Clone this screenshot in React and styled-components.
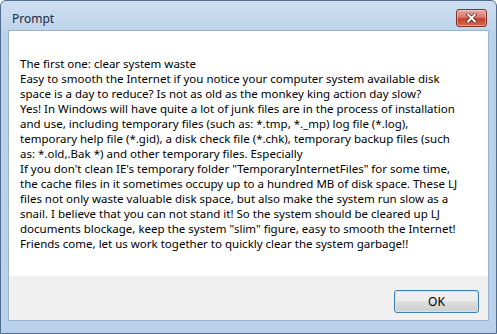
import styled, { createGlobalStyle } from 'styled-components';

const Global = createGlobalStyle`
  html, body { margin: 0; padding: 0; background: #fff; }
  body { font-family: "Noto Sans", "Open Sans", sans-serif; }
`;

const Window = styled.div`
  box-sizing: border-box;
  width: 497px;
  height: 334px;
  display: flex;
  flex-direction: column;
  padding: 0 7px 12px 7px;
  border: 1px solid #4f6c8e;
  border-radius: 6px 6px 0 0;
  background: linear-gradient(180deg, #cfdff1 0%, #b9d0ea 12%, #b9d1ea 100%);
`;

const TitleBar = styled.div`
  box-sizing: border-box;
  height: 29px;
  display: flex;
  align-items: flex-start;
  justify-content: space-between;
  padding: 8px 2px 0 4px;
`;

const Title = styled.span`
  font-size: 12px;
  line-height: 16px;
  color: #1c2a3f;
  margin-top: 2px;
`;

const CloseButton = styled.div`
  box-sizing: border-box;
  width: 31px;
  height: 18px;
  border: 1px solid #7d3326;
  border-radius: 3px;
  background: linear-gradient(180deg, #e9a99f 0%, #d9786b 45%, #c2412f 55%, #d46a4e 100%);
  display: flex;
  align-items: center;
  justify-content: center;
  box-shadow: inset 0 0 0 1px rgba(255, 255, 255, 0.35);
`;

const Client = styled.div`
  flex: 1;
  display: flex;
  flex-direction: column;
  border: 1px solid #9db3cb;
  background: #f0f0f0;
`;

const Message = styled.div`
  flex: 1;
  background: #fff;
  padding: 25px 11px 0 11px;
  font-size: 11.5px;
  line-height: 15px;
  color: #000;
`;

const Line = styled.div`
  white-space: nowrap;
`;

const Footer = styled.div`
  height: 44px;
  display: flex;
  justify-content: flex-end;
  align-items: flex-start;
  padding: 14px 9px 0 0;
  box-sizing: border-box;
`;

const Button = styled.button`
  width: 85px;
  height: 23px;
  border: 1px solid #3c7fb1;
  border-radius: 3px;
  font-family: inherit;
  font-size: 12px;
  color: #000;
  padding: 0;
  background: linear-gradient(180deg, #f2f2f2 0%, #ebebeb 48%, #dddddd 52%, #cfcfcf 100%);
  box-shadow: inset 0 0 0 1px #cde6f5;
`;

const lines = [
  'The first one: clear system waste',
  'Easy to smooth the Internet if you notice your computer system available disk',
  'space is a day to reduce? Is not as old as the monkey king action day slow?',
  'Yes! In Windows will have quite a lot of junk files are in the process of installation',
  'and use, including temporary files (such as: *.tmp, *._mp) log file (*.log),',
  'temporary help file (*.gid), a disk check file (*.chk), temporary backup files (such',
  'as: *.old,.Bak *) and other temporary files. Especially',
  'If you don\'t clean IE\'s temporary folder "TemporaryInternetFiles" for some time,',
  'the cache files in it sometimes occupy up to a hundred MB of disk space. These LJ',
  'files not only waste valuable disk space, but also make the system run slow as a',
  'snail. I believe that you can not stand it! So the system should be cleared up LJ',
  'documents blockage, keep the system "slim" figure, easy to smooth the Internet!',
  'Friends come, let us work together to quickly clear the system garbage!!',
];

export default function App() {
  return (
    <>
      <Global />
      <Window>
        <TitleBar>
          <Title>Prompt</Title>
          <CloseButton>
            <svg width="11" height="10" viewBox="0 0 11 10">
              <path d="M2 1.5 L9 8.5 M9 1.5 L2 8.5" stroke="#5a1d14" strokeWidth="3.4" strokeLinecap="square" />
              <path d="M2 1.5 L9 8.5 M9 1.5 L2 8.5" stroke="#fff" strokeWidth="2" strokeLinecap="square" />
            </svg>
          </CloseButton>
        </TitleBar>
        <Client>
          <Message>
            {lines.map((l, i) => <Line key={i}>{l}</Line>)}
          </Message>
          <Footer>
            <Button>OK</Button>
          </Footer>
        </Client>
      </Window>
    </>
  );
}
